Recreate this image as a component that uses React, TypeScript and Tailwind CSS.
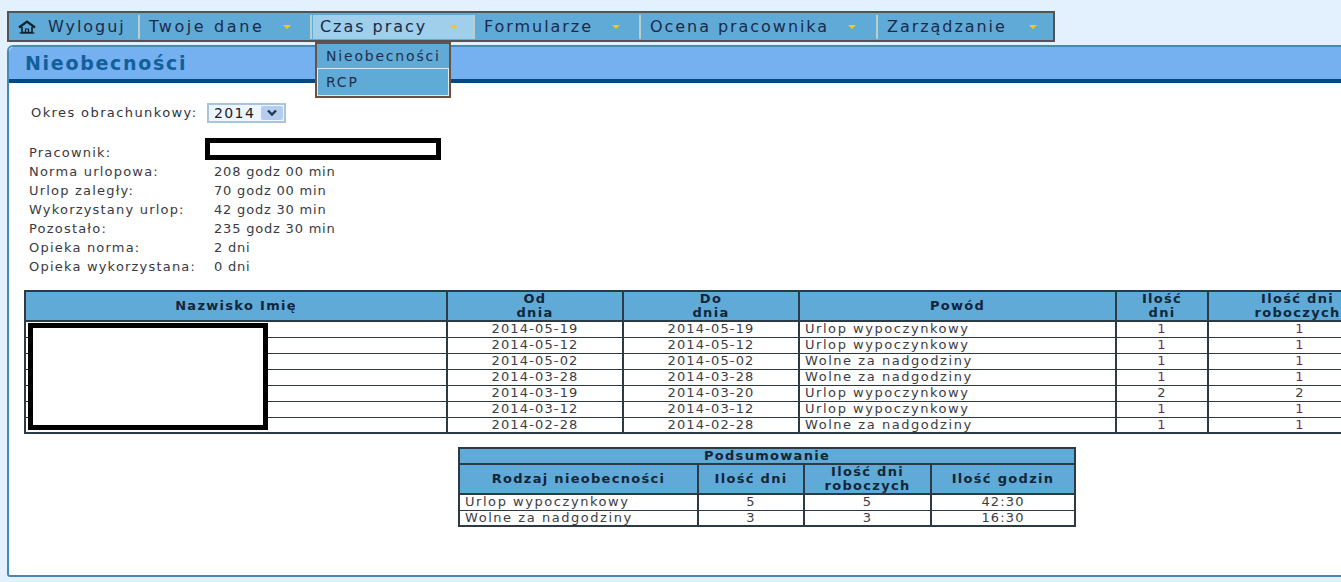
const menu = [
  { label: "Twoje dane", w: "w-[172px]", pr: "pr-[19px]", t: "tracking-[2.6px]" },
  { label: "Czas pracy", w: "w-[163px]", pr: "pr-[15px]", active: true },
  { label: "Formularze", w: "w-[166px]", pr: "pr-[19px]" },
  { label: "Ocena pracownika", w: "w-[237px]", pr: "pr-[20px]" },
  { label: "Zarządzanie", w: "w-[177px]", pr: "pr-[18px]", last: true },
];

const stats = [
  ["Norma urlopowa:", "208 godz 00 min"],
  ["Urlop zaległy:", "70 godz 00 min"],
  ["Wykorzystany urlop:", "42 godz 30 min"],
  ["Pozostało:", "235 godz 30 min"],
  ["Opieka norma:", "2 dni"],
  ["Opieka wykorzystana:", "0 dni"],
];

const rows = [
  ["2014-05-19", "2014-05-19", "Urlop wypoczynkowy", "1", "1"],
  ["2014-05-12", "2014-05-12", "Urlop wypoczynkowy", "1", "1"],
  ["2014-05-02", "2014-05-02", "Wolne za nadgodziny", "1", "1"],
  ["2014-03-28", "2014-03-28", "Wolne za nadgodziny", "1", "1"],
  ["2014-03-19", "2014-03-20", "Urlop wypoczynkowy", "2", "2"],
  ["2014-03-12", "2014-03-12", "Urlop wypoczynkowy", "1", "1"],
  ["2014-02-28", "2014-02-28", "Wolne za nadgodziny", "1", "1"],
];

const th = "border-2 border-[#2b3a44] bg-[#60aad8] p-0 text-center align-middle font-bold leading-[14px] tracking-[1.3px] text-[#12263a]";
const td = "h-[16px] border-x-2 border-y border-[#2b3a44] p-0 leading-[14px] text-[#3c3c44]";
const reason = "pl-[5px] tracking-[1.55px]";

const numColor = (v: string) => (v === "1" ? "text-[#7a1f66]" : "text-[#3c3c44]");

export default function App() {
  return (
    <div className="relative h-[582px] w-[1341px] overflow-hidden bg-[#e3f1fe] pl-[7px] pt-[11px] font-['DejaVu_Sans',sans-serif]">
      <nav className="flex h-[31px] w-[1048px] items-center border-2 border-[#55534f] bg-[#60aad8] text-[16px] tracking-[1.95px] text-[#1a2a4a]">
        <div className="flex h-[24px] w-[131px] shrink-0 items-center border-r-2 border-[#b9cfc9] pl-[9px]">
          <svg width="18" height="14" viewBox="0 0 18 14" fill="none" className="text-[#10202c]">
            <path d="M1 7.5 L9 1.5 L17 7.5" stroke="currentColor" strokeWidth="2.2" />
            <path d="M4 7 V12.5 H14 V7" stroke="currentColor" strokeWidth="1.6" />
            <path d="M1.5 13 H16.5" stroke="currentColor" strokeWidth="1.2" />
            <path d="M7.5 12.5 V9 H10.5 V12.5" stroke="currentColor" strokeWidth="1.2" />
          </svg>
          <span className="ml-[12px]">Wyloguj</span>
        </div>
        {menu.map((m) => (
          <div key={m.label} className={`flex h-[24px] shrink-0 items-center ${m.w}`}>
            <div className={`flex h-full flex-1 items-center justify-between ${m.pr} ${m.active ? "ml-[1px] bg-[#9fcfea] pl-[7px]" : "pl-[9px]"}`}>
              <span className={m.t}>{m.label}</span>
              <span className="h-0 w-0 border-x-[4px] border-t-[4px] border-x-transparent border-t-[#f2c81e]" />
            </div>
            {!m.last && <div className="h-full w-[2px] bg-[#b9cfc9]" />}
          </div>
        ))}
      </nav>

      <main className="mt-[3px] h-[532px] w-[1400px] rounded-tl-[6px] rounded-bl-[3px] border-2 border-[#4788b5] bg-white">
        <div className="flex h-[36px] items-center rounded-tl-[5px] border-b-[4px] border-[#04497f] bg-[#75b0f0] pl-[16px] text-[19px] font-bold tracking-[1.7px] text-[#11609a]">
          Nieobecności
        </div>

        <div className="mt-[20px] flex h-[20px] items-center pl-[22px] text-[13px] tracking-[1.4px] text-[#33333c]">
          <span className="w-[176px] shrink-0 whitespace-nowrap">Okres obrachunkowy:</span>
          <div className="flex h-[20px] w-[79px] items-center justify-between border-2 border-[#a9c4de] bg-[#eef6fd] pl-[5px] pr-[1px] text-[14px] text-[#1a1a28]">
            <span>2014</span>
            <span className="flex h-[14px] w-[22px] items-center justify-center rounded-[2px] bg-[#b4cdee]">
              <svg width="12" height="8" viewBox="0 0 12 8" fill="none">
                <path d="M2 1.5 L6 5.5 L10 1.5" stroke="#24384f" strokeWidth="2.4" />
              </svg>
            </span>
          </div>
        </div>

        <div className="ml-[20px] mt-[20px] grid grid-cols-[185px_1fr] text-[13px] leading-[19px] text-[#3a3a42]">
          <span className="tracking-[1.2px]">Pracownik:</span>
          <span />
          {stats.map(([k, v]) => [
            <span key={k} className="tracking-[1.2px]">
              {k}
            </span>,
            <span key={v + k} className="tracking-[0.8px]">
              {v}
            </span>,
          ])}
        </div>

        <table className="ml-[15px] mt-[14px] w-[1383px] table-fixed border-collapse border-2 border-[#2b3a44] text-[13px] tracking-[1.15px]">
          <colgroup>
            <col className="w-[422px]" />
            <col className="w-[176px]" />
            <col className="w-[176px]" />
            <col className="w-[317px]" />
            <col className="w-[92px]" />
            <col className="w-[200px]" />
          </colgroup>
          <thead>
            <tr className="h-[28px]">
              <th className={th}>Nazwisko Imię</th>
              <th className={th}>
                Od
                <br />
                dnia
              </th>
              <th className={th}>
                Do
                <br />
                dnia
              </th>
              <th className={th}>Powód</th>
              <th className={th}>
                Ilość
                <br />
                dni
              </th>
              <th className={`${th} pr-[21px]`}>
                Ilość dni
                <br />
                roboczych
              </th>
            </tr>
          </thead>
          <tbody>
            {rows.map((r) => (
              <tr key={r[0]} className="h-[16px]">
                <td className={td} />
                <td className={`${td} text-center`}>{r[0]}</td>
                <td className={`${td} text-center`}>{r[1]}</td>
                <td className={`${td} ${reason}`}>{r[2]}</td>
                <td className={`${td} text-center ${numColor(r[3])}`}>{r[3]}</td>
                <td className={`${td} pr-[16px] text-center ${numColor(r[4])}`}>{r[4]}</td>
              </tr>
            ))}
          </tbody>
        </table>

        <table className="ml-[449px] mt-[13px] w-[616px] table-fixed border-collapse border-2 border-[#2b3a44] text-[13px] tracking-[1.15px]">
          <colgroup>
            <col className="w-[239px]" />
            <col className="w-[106px]" />
            <col className="w-[127px]" />
            <col className="w-[144px]" />
          </colgroup>
          <thead>
            <tr className="h-[15px]">
              <th colSpan={4} className={th}>
                Podsumowanie
              </th>
            </tr>
            <tr className="h-[28px]">
              <th className={th}>Rodzaj nieobecności</th>
              <th className={th}>Ilość dni</th>
              <th className={th}>
                Ilość dni
                <br />
                roboczych
              </th>
              <th className={th}>Ilość godzin</th>
            </tr>
          </thead>
          <tbody>
            <tr className="h-[16px]">
              <td className={`${td} ${reason}`}>Urlop wypoczynkowy</td>
              <td className={`${td} text-center`}>5</td>
              <td className={`${td} text-center`}>5</td>
              <td className={`${td} text-center`}>42:30</td>
            </tr>
            <tr className="h-[16px]">
              <td className={`${td} ${reason}`}>Wolne za nadgodziny</td>
              <td className={`${td} text-center`}>3</td>
              <td className={`${td} text-center`}>3</td>
              <td className={`${td} text-center`}>16:30</td>
            </tr>
          </tbody>
        </table>
      </main>

      {/* dropdown of the active menu item */}
      <div className="absolute left-[315px] top-[42px] w-[136px] border-2 border-[#6b5140] bg-[#60aad8] text-[14px] tracking-[1.8px] text-[#1f2f4a]">
        <div className="flex h-[25px] items-center border-b border-[#dcecf6] pl-[9px]">Nieobecności</div>
        <div className="flex h-[27px] items-center border border-t-0 border-[#dcecf6] pl-[8px]">RCP</div>
      </div>

      {/* redaction boxes painted over the screenshot */}
      <div className="absolute left-[205px] top-[138px] h-[22px] w-[236px] border-[5px] border-black bg-white" />
      <div className="absolute left-[28px] top-[323px] h-[107px] w-[240px] border-[5px] border-black bg-white" />
    </div>
  );
}
